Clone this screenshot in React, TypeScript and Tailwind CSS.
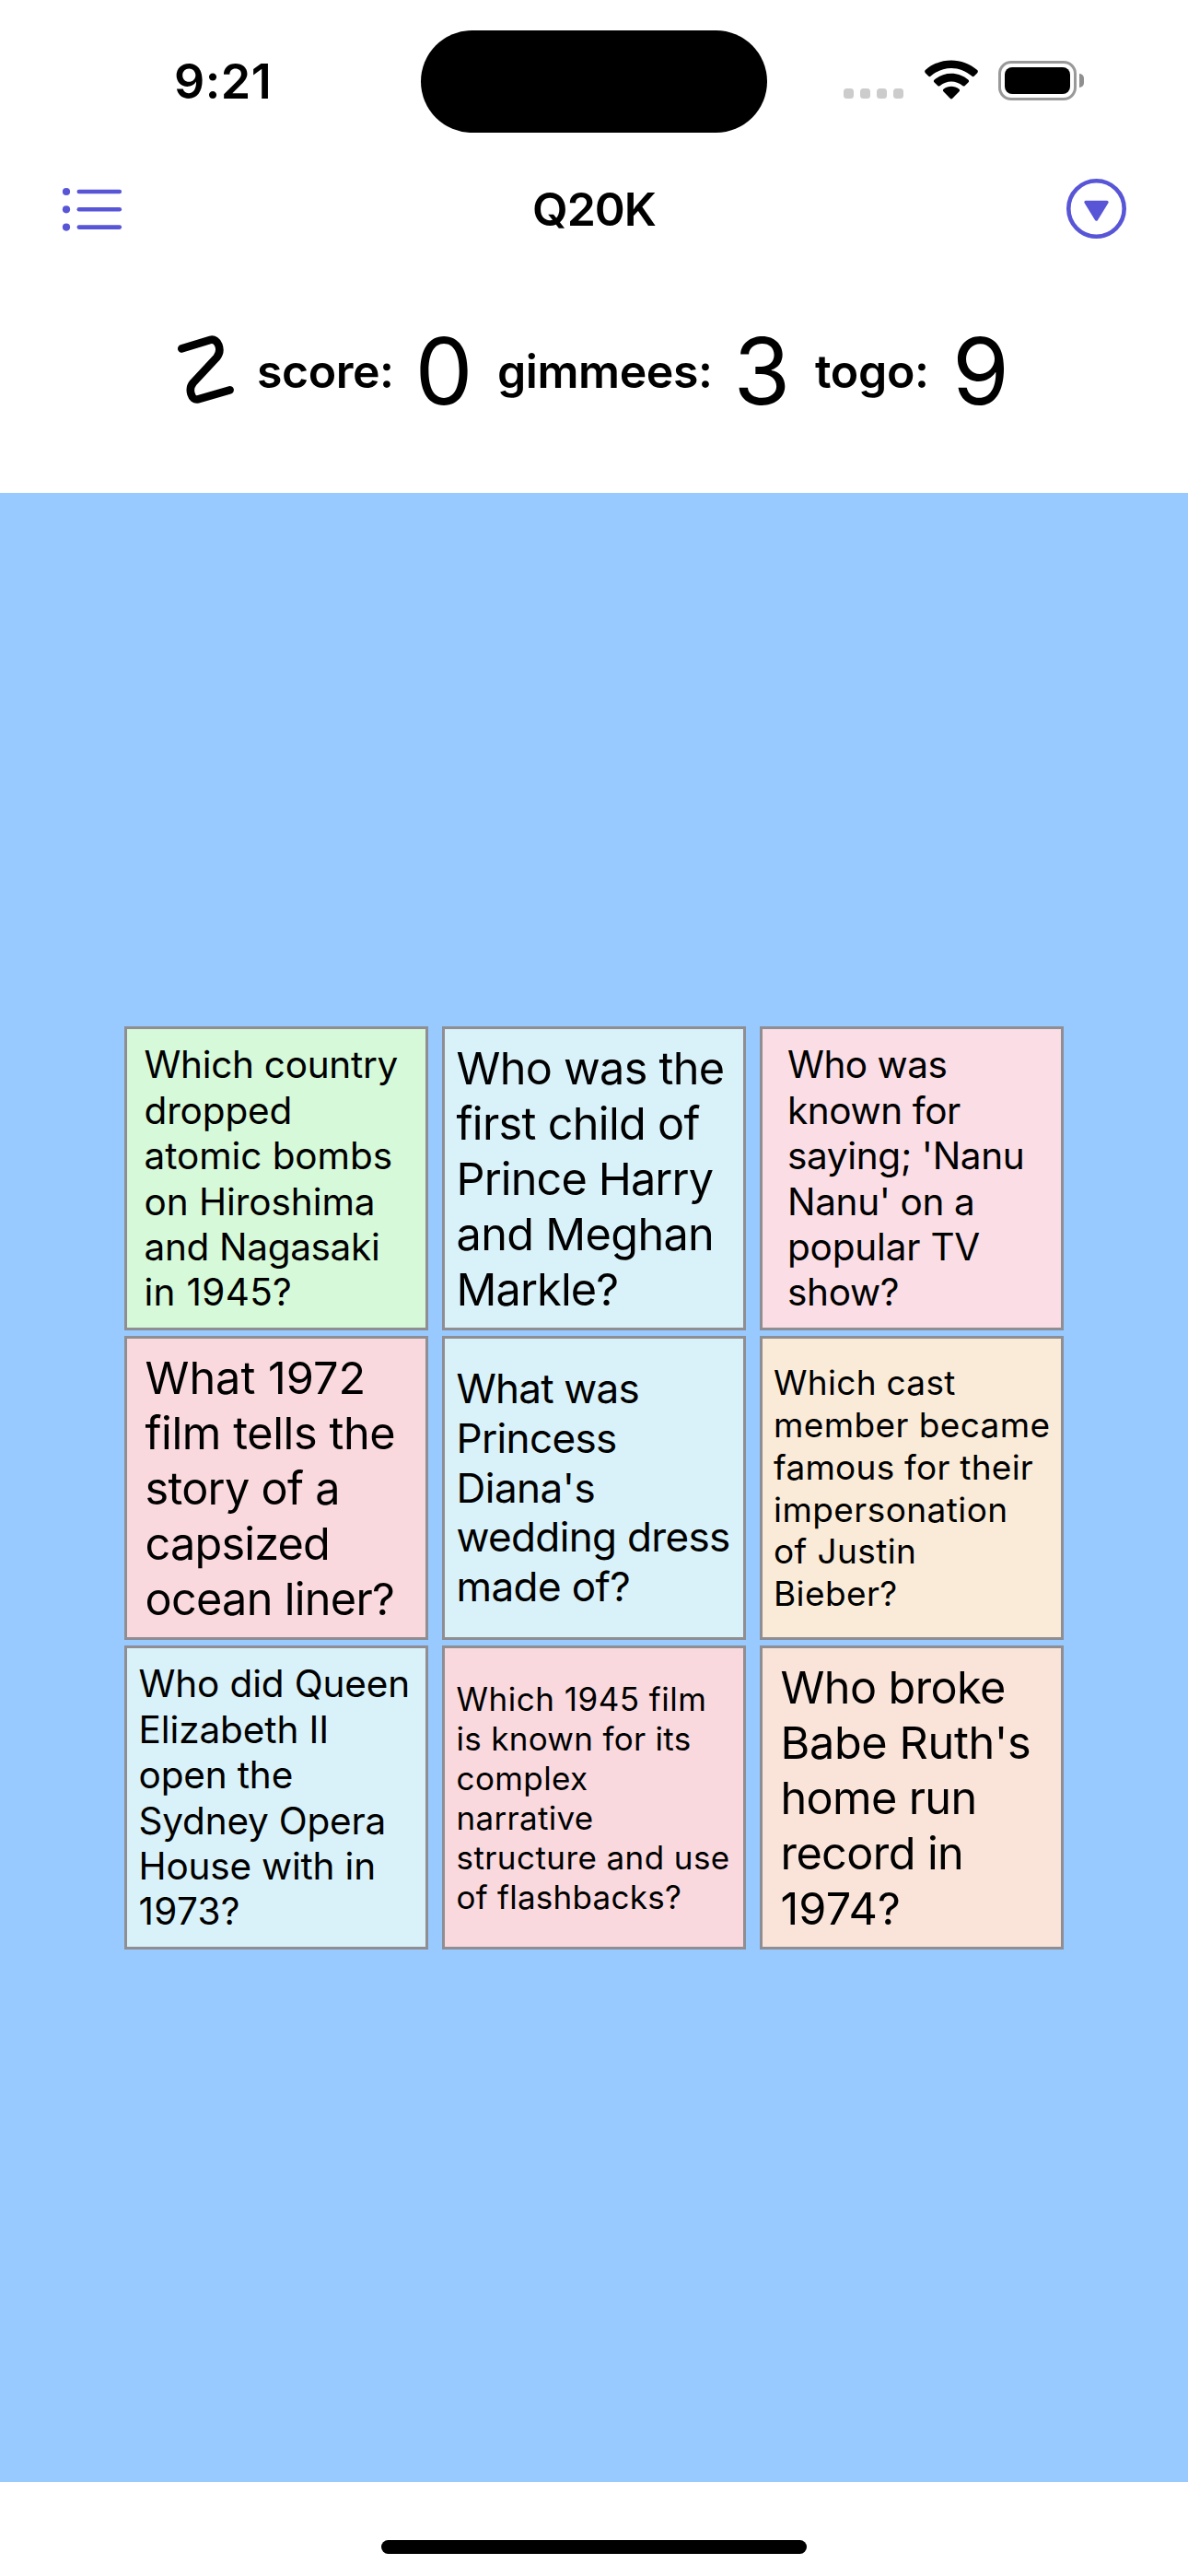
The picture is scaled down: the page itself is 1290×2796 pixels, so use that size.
type Line = [text: string, tracking: string];
type Question = { box: string; lines: Line[] };

const questions: Question[] = [
  {
    box: 'bg-[#d6f9d9] pl-[18.5px] text-[40.5px] leading-[49.4px]',
    lines: [
      ['Which country', 'tracking-[-0.3px]'],
      ['dropped', 'tracking-[-0.14px]'],
      ['atomic bombs', 'tracking-[-0.08px]'],
      ['on Hiroshima', 'tracking-[-0.06px]'],
      ['and Nagasaki', 'tracking-[-0.33px]'],
      ['in 1945?', 'tracking-[0.3px]'],
    ],
  },
  {
    box: 'bg-[#d9f2f9] pl-[12.5px] text-[48.6px] leading-[60px]',
    lines: [
      ['Who was the', 'tracking-[-0.72px]'],
      ['first child of', 'tracking-[-0.68px]'],
      ['Prince Harry', 'tracking-[-0.88px]'],
      ['and Meghan', 'tracking-[-0.65px]'],
      ['Markle?', 'tracking-[-0.88px]'],
    ],
  },
  {
    box: 'bg-[#fadde5] pl-[27px] text-[40.5px] leading-[49.4px]',
    lines: [
      ['Who was', 'tracking-[-0.5px]'],
      ['known for', 'tracking-[-0.4px]'],
      ["saying; 'Nanu", 'tracking-[-0.33px]'],
      ["Nanu' on a", 'tracking-[-0.35px]'],
      ['popular TV', 'tracking-[-0.2px]'],
      ['show?', 'tracking-[-0.3px]'],
    ],
  },
  {
    box: 'bg-[#f9d9de] pl-[19.5px] text-[48.6px] leading-[60px]',
    lines: [
      ['What 1972', 'tracking-[0px]'],
      ['film tells the', 'tracking-[-0.4px]'],
      ['story of a', 'tracking-[-0.7px]'],
      ['capsized', 'tracking-[-0.8px]'],
      ['ocean liner?', 'tracking-[-0.7px]'],
    ],
  },
  {
    box: 'bg-[#d9f2f9] pl-[12.5px] text-[44px] leading-[53.8px]',
    lines: [
      ['What was', 'tracking-[-0.8px]'],
      ['Princess', 'tracking-[-0.65px]'],
      ["Diana's", 'tracking-[-0.5px]'],
      ['wedding dress', 'tracking-[-0.65px]'],
      ['made of?', 'tracking-[-0.6px]'],
    ],
  },
  {
    box: 'bg-[#faebd9] pl-[12px] text-[37px] leading-[45.8px]',
    lines: [
      ['Which cast', 'tracking-[0.3px]'],
      ['member became', 'tracking-[0.39px]'],
      ['famous for their', 'tracking-[0.26px]'],
      ['impersonation', 'tracking-[0.43px]'],
      ['of Justin', 'tracking-[0.4px]'],
      ['Bieber?', 'tracking-[0.4px]'],
    ],
  },
  {
    box: 'bg-[#d9f2f9] pl-[12.5px] text-[40.5px] leading-[49.4px]',
    lines: [
      ['Who did Queen', 'tracking-[-0.14px]'],
      ['Elizabeth II', 'tracking-[-0.1px]'],
      ['open the', 'tracking-[-0.15px]'],
      ['Sydney Opera', 'tracking-[-0.2px]'],
      ['House with in', 'tracking-[-0.2px]'],
      ['1973?', 'tracking-[0.3px]'],
    ],
  },
  {
    box: 'bg-[#f9d9de] pl-[12.5px] text-[35px] leading-[43px]',
    lines: [
      ['Which 1945 film', 'tracking-[0.5px]'],
      ['is known for its', 'tracking-[0.3px]'],
      ['complex', 'tracking-[0.4px]'],
      ['narrative', 'tracking-[0.3px]'],
      ['structure and use', 'tracking-[0.42px]'],
      ['of flashbacks?', 'tracking-[0.25px]'],
    ],
  },
  {
    box: 'bg-[#fae4d9] pl-[19.5px] text-[48.6px] leading-[60px]',
    lines: [
      ['Who broke', 'tracking-[-0.6px]'],
      ["Babe Ruth's", 'tracking-[-0.35px]'],
      ['home run', 'tracking-[-0.65px]'],
      ['record in', 'tracking-[-0.6px]'],
      ['1974?', 'tracking-[0.1px]'],
    ],
  },
];

function WifiIcon() {
  return (
    <svg width="58" height="44" viewBox="0 0 58 44" className="ml-[76px]">
      <path d="M0.8 14.2C-0.1 13.2-0.1 12 0.8 11.1C16.5-3.1 41.5-3.1 57.2 11.1C58.1 12 58.1 13.2 57.2 14.2L53.9 17.6C53.1 18.4 52.1 18.4 51.3 17.6C38.6 6 19.4 6 6.7 17.6C5.9 18.4 4.9 18.4 4.1 17.6Z" />
      <path d="M10.6 24.5C9.6 23.5 9.6 22.5 10.7 21.5C21 12.4 37 12.4 47.3 21.5C48.4 22.5 48.4 23.5 47.4 24.5L43.8 28C43 28.8 42.1 28.7 41.2 28C34.1 21.9 23.9 21.9 16.8 28C15.9 28.7 15 28.8 14.2 28Z" />
      <path d="M20.6 34.6C19.6 33.6 19.6 32.6 20.8 31.6C25.6 27.8 32.4 27.8 37.2 31.6C38.4 32.6 38.4 33.6 37.4 34.6L30.3 41.8C29.4 42.7 28.6 42.7 27.7 41.8Z" />
    </svg>
  );
}

function StatusBar() {
  return (
    <div className="relative flex h-[177px] pt-[65px]">
      <div className="absolute left-[457px] top-[33px] h-[111px] w-[376px] rounded-full bg-black" />
      <div className="ml-[189px] mt-px h-[46px] w-[110px] text-[52px] font-semibold leading-[46px] tracking-[0.5px]">9:21</div>
      <div className="ml-[617px] flex h-[46px] gap-[6.6px] pt-[31px]">
        {[0, 1, 2, 3].map((dot) => (
          <span key={dot} className="h-[11px] w-[11.4px] rounded-[3.5px] bg-[#cccccc]" />
        ))}
      </div>
      <div className="-ml-[53px] flex h-[44px] items-center">
        <WifiIcon />
        <div className="ml-[22px] h-[43px] w-[85px] rounded-[14px] border-[3px] border-[#999999] p-[4px]">
          <div className="h-full w-full rounded-[8px] bg-black" />
        </div>
        <div className="ml-[3px] h-[15px] w-[5px] rounded-r-[5px] bg-[#8f8f8f]" />
      </div>
    </div>
  );
}

function NavBar() {
  return (
    <div className="flex h-[99px] items-center justify-between pl-[67px] pr-[66px]">
      <svg width="66" height="50" viewBox="0 0 66 50" fill="#5856d6" stroke="#5856d6">
        {[6, 25.3, 44.6].map((y) => (
          <g key={y}>
            <circle cx="5" cy={y} r="4.1" stroke="none" />
            <path d={`M18.8 ${y}H62.8`} strokeWidth="4.6" strokeLinecap="round" />
          </g>
        ))}
      </svg>
      <h1 className="text-[50px] font-semibold leading-[60px] tracking-[-1px]">Q20K</h1>
      <svg width="67" height="67" viewBox="0 0 67 67" fill="none" stroke="#5856d6">
        <circle cx="33.5" cy="33.5" r="30.2" strokeWidth="4.6" />
        <path d="M22 26.4H45L33.5 45Z" fill="#5856d6" strokeWidth="3.4" strokeLinejoin="round" />
      </svg>
    </div>
  );
}

function ScoreRow() {
  return (
    <div className="flex h-[254px] shrink-0 items-center whitespace-nowrap pl-[193px] text-[50px] font-semibold leading-[60px]">
      <svg width="62" height="76" viewBox="0 0 62 76" fill="none" stroke="#000" strokeWidth="8.6" strokeLinecap="round" strokeLinejoin="round" className="-mt-[4px]">
        <path d="M4.3 15.4L35.5 5.9C43.5 3.8 48.8 16.5 42.4 24.8L16.8 52.4C10.8 59.5 15 72.4 22 70.3L56.6 60.3" />
      </svg>
      <span className="ml-[24px] w-[148px] tracking-[-0.47px]">score:</span>
      <span className="ml-[23.5px] w-[63px] text-[100px] font-normal">0</span>
      <span className="ml-[26.5px] w-[233px] tracking-[-0.43px]">gimmees:</span>
      <span className="ml-[23.5px] w-[62px] text-[100px] font-normal">3</span>
      <span className="ml-[26.5px] w-[123px] tracking-[-0.33px]">togo:</span>
      <span className="ml-[26px] w-[62px] text-[100px] font-normal">9</span>
    </div>
  );
}

export default function App() {
  return (
    <div className="flex h-[2796px] w-[1290px] flex-col overflow-hidden bg-white font-['Inter',sans-serif] text-black">
      <StatusBar />
      <NavBar />
      <ScoreRow />
      <main className="mt-[5px] flex h-[2159px] shrink-0 items-center justify-center bg-[#98c9ff]">
        <div className="grid grid-cols-[330px_330px_330px] grid-rows-[330px_330px_330px] gap-x-[15px] gap-y-[6px]">
          {questions.map(({ box, lines }) => (
            <div key={lines.map(([text]) => text).join(' ')} className={`flex flex-col justify-center whitespace-nowrap border-[3px] border-[#8e8e93] pt-[2px] ${box}`}>
              {lines.map(([text, tracking]) => (
                <div key={text} className={tracking}>{text}</div>
              ))}
            </div>
          ))}
        </div>
      </main>
      <footer className="flex flex-1 items-start justify-center pt-[63px]">
        <div className="h-[15px] w-[462px] rounded-full bg-black" />
      </footer>
    </div>
  );
}
